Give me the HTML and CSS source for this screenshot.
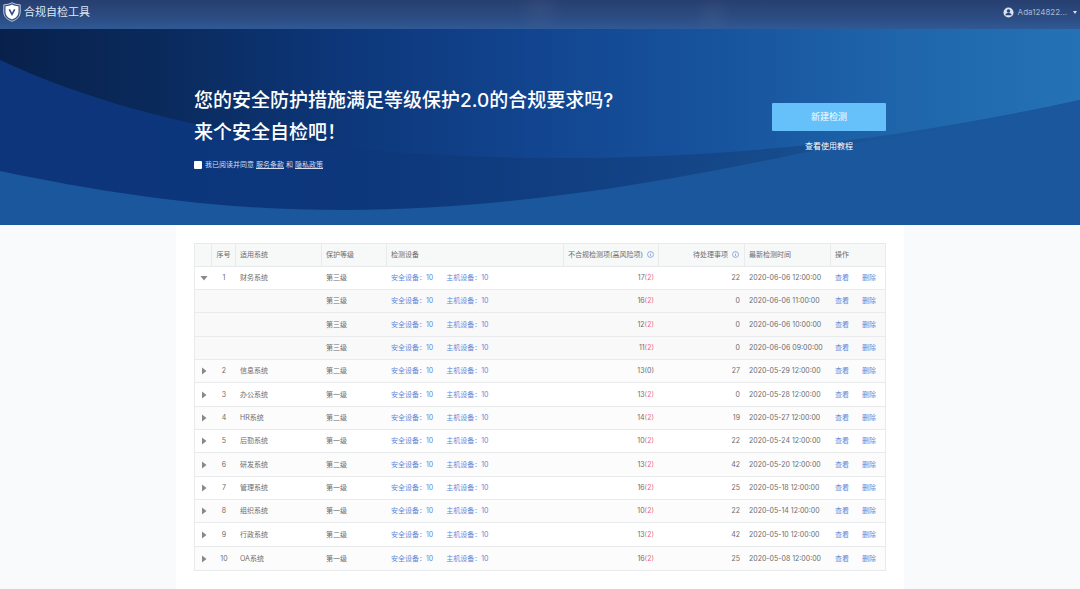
FILE: index.html
```html
<!DOCTYPE html>
<html lang="zh-CN">
<head>
<meta charset="utf-8">
<title>合规自检工具</title>
<meta name="viewport" content="width=device-width, initial-scale=1">
<link rel="stylesheet" href="styles.css">
</head>
<body>
<header class="topbar">
  <div class="brand">
    <svg class="brand-logo" viewBox="0 0 18 20" aria-hidden="true">
      <path d="M9 .7C6.5 2.2 3.700 2.700.8 2.800V10c0 4.700 3.300 7.500 8.200 9.300 4.900-1.800 8.200-4.600 8.200-9.300V2.800C14.300 2.700 11.500 2.200 9 .7z" fill="#2b4a80" stroke="#e9eff8" stroke-width=".8"/>
      <path d="M9 2.500C7 3.600 4.800 4.100 2.500 4.200V10c0 3.700 2.500 5.900 6.500 7.500 4-1.600 6.500-3.800 6.500-7.500V4.200C13.200 4.100 11 3.600 9 2.500z" fill="#fff"/>
      <path d="M6.300 7.400L9 12.300l2.700-4.900" fill="none" stroke="#2b4a80" stroke-width="1.600"/>
    </svg>
    <span class="brand-name">合规自检工具</span>
  </div>
  <button class="user" type="button">
    <svg class="user-icon" viewBox="0 0 12 12" aria-hidden="true">
      <circle cx="6" cy="6" r="5.500" fill="#d9e2f0"/>
      <circle cx="6" cy="4.300" r="1.900" fill="#2b4477"/>
      <path d="M2.700 8.900c0-1.700 1.500-2.300 3.300-2.300s3.300.6 3.300 2.300z" fill="#2b4477"/>
    </svg>
    <span>Ada124822...</span>
    <svg class="user-caret" viewBox="0 0 4 3" aria-hidden="true"><path d="M0 0h4L2 3z" fill="#d9e2f0"/></svg>
  </button>
</header>

<section class="hero">
  <svg class="hero-waves" viewBox="0 0 1080 196" preserveAspectRatio="none" aria-hidden="true">
    <defs>
      <linearGradient id="sky" x1="0" y1="0" x2="1" y2="0">
        <stop offset="0" stop-color="#08214c"/>
        <stop offset=".15" stop-color="#0a2a5c"/>
        <stop offset=".32" stop-color="#0d377a"/>
        <stop offset=".5" stop-color="#124590"/>
        <stop offset=".68" stop-color="#18559f"/>
        <stop offset=".84" stop-color="#1f66ab"/>
        <stop offset="1" stop-color="#2472b5"/>
      </linearGradient>
      <linearGradient id="mid" x1="0" y1="0" x2="1" y2="0">
        <stop offset="0" stop-color="#0c357b"/>
        <stop offset=".34" stop-color="#0d377b"/>
        <stop offset=".55" stop-color="#114083"/>
        <stop offset=".72" stop-color="#164b8b"/>
        <stop offset=".82" stop-color="#1a5699"/>
        <stop offset="1" stop-color="#1b579b"/>
      </linearGradient>
    </defs>
    <rect width="1080" height="196" fill="url(#sky)"/>
    <path d="M0 31C150 101 340 129 560 129C760 129 920 105 1080 71V196H0z" fill="url(#mid)"/>
    <path d="M0 142C130 169 230 181 345 181C520 181 690 148 830 118C920 104 1000 90 1080 71V196H0z" fill="#1b579c"/>
  </svg>
  <div class="hero-inner">
    <div class="hero-copy">
      <h1 class="hero-title">您的安全防护措施满足等级保护2.0的合规要求吗?<br>来个安全自检吧！</h1>
      <div class="agree">
        <input class="agree-box" type="checkbox" id="agree">
        <label for="agree">我已阅读并同意</label>
        <a href="#terms">服务条款</a>
        <span>和</span>
        <a href="#privacy">隐私政策</a>
      </div>
    </div>
    <div class="hero-actions">
      <button class="create" type="button">新建检测</button>
      <a class="tutorial" href="#tutorial">查看使用教程</a>
    </div>
  </div>
</section>

<main class="panel">
  <table class="checks">
    <colgroup><col class="c-toggle"><col class="c-no"><col class="c-system"><col class="c-level"><col class="c-device"><col class="c-issue"><col class="c-todo"><col class="c-time"><col class="c-action"></colgroup>
    <thead>
      <tr>
        <th></th><th class="center">序号</th><th>适用系统</th><th>保护等级</th><th>检测设备</th>
        <th class="num">不合规检测项(高风险项)<svg class="info" viewBox="0 0 8 8" aria-hidden="true"><circle cx="4" cy="4" r="3.400"/><path d="M4 3.500v2.400M4 2v.8"/></svg></th>
        <th class="num">待处理事项<svg class="info" viewBox="0 0 8 8" aria-hidden="true"><circle cx="4" cy="4" r="3.400"/><path d="M4 3.500v2.400M4 2v.8"/></svg></th>
        <th>最新检测时间</th><th>操作</th>
      </tr>
    </thead>
    <tbody id="rows"></tbody>
  </table>
</main>
<script src="app.js"></script>
</body>
</html>
```
FILE: styles.css
```css
* { box-sizing: border-box; }

body {
  margin: 0;
  min-height: 100vh;
  display: flex;
  flex-direction: column;
  background: #f9fafc;
  color: #6c6c6c;
  font: 7px/10px Inter, "Noto Sans CJK SC", sans-serif;
}

button {
  border: 0;
  font: inherit;
  cursor: pointer;
}

a { color: inherit; }

.topbar {
  display: flex;
  justify-content: space-between;
  align-items: flex-start;
  height: 29px;
  padding: 2px 3px;
  background:
    radial-gradient(circle at 50% 30%, rgba(255, 255, 255, .04), transparent 24px),
    radial-gradient(circle at 66% 50%, rgba(255, 255, 255, .04), transparent 20px),
    linear-gradient(#273f70, #2c4c82 60%, #305995);
}

.brand {
  display: flex;
  align-items: center;
  gap: 3px;
}

.brand-logo { width: 18px; height: 20px; }

.brand-name {
  color: #dfe8f5;
  font-size: 11px;
  line-height: 20px;
}

.user {
  display: flex;
  align-items: center;
  gap: 4px;
  height: 20px;
  padding: 0;
  background: none;
  color: #a9b8d2;
  font-size: 8px;
}

.user-icon { width: 11px; height: 11px; }
.user-caret { width: 4px; height: 3px; margin-left: 2px; }

.hero {
  position: relative;
  height: 196px;
  color: #fff;
}

.hero-waves {
  position: absolute;
  inset: 0;
  width: 100%;
  height: 100%;
}

.hero-inner {
  position: relative;
  display: flex;
  justify-content: space-between;
  max-width: 692px;
  margin: 0 auto;
  padding-top: 56px;
}

.hero-title {
  margin: 0;
  font-size: 19px;
  line-height: 32px;
  font-weight: 500;
}

.agree {
  display: flex;
  align-items: center;
  gap: 2px;
  margin-top: 11px;
  color: #d3def0;
}

.agree-box {
  appearance: none;
  width: 8px;
  height: 8px;
  margin: 0 1px 0 0;
  border-radius: 1px;
  background: #fff;
}

.agree-box:checked { background: #66c1fb; }

.hero-actions {
  display: flex;
  flex-direction: column;
  align-items: center;
  gap: 10px;
  padding-top: 18px;
}

.create {
  width: 114px;
  height: 28px;
  border-radius: 1px;
  background: #66c1fb;
  color: #fff;
  font-size: 9px;
}

.tutorial {
  font-size: 8px;
  text-decoration: none;
}

.panel {
  flex: 1;
  width: 100%;
  max-width: 728px;
  margin: 0 auto;
  padding: 18px;
  background: #fff;
}

.checks {
  width: 100%;
  table-layout: fixed;
  border-spacing: 0;
  border: 1px solid #e9eaec;
}

.c-toggle { width: 17px; }
.c-no { width: 24px; }
.c-system { width: 86px; }
.c-level { width: 65px; }
.c-device { width: 177px; }
.c-issue { width: 95px; }
.c-todo { width: 86px; }
.c-time { width: 86px; }

.checks th,
.checks td {
  height: 23px;
  padding: 0 5px 0 4px;
  border-bottom: 1px solid #e9eaec;
  text-align: left;
  font-weight: 400;
  white-space: nowrap;
}

.checks th {
  background: #f7f8f8;
  border-right: 1px solid #e9eaec;
}

.checks th:last-child { border-right: 0; }
.checks tbody tr:nth-child(3n) td { height: 24px; }
.checks tbody tr:last-child td { border-bottom: 0; }
.checks .striped { background: #fcfcfc; }
.checks .child { background: #f9f9fa; }
.checks .center { padding: 0; text-align: center; }
.checks .num { text-align: right; }

.checks a {
  margin-right: 13px;
  color: #6289da;
  text-decoration: none;
}

.checks a:last-child { margin-right: 0; }
.risk { color: #f0687d; }

.info {
  width: 7px;
  height: 7px;
  margin-left: 4px;
  vertical-align: -1px;
  fill: none;
  stroke: #6b8ee0;
  stroke-width: .8;
}

.toggle {
  display: block;
  width: 8px;
  height: 8px;
  margin: 0 auto;
  padding: 0;
  background: none;
}

.toggle svg {
  display: block;
  width: 8px;
  height: 8px;
  fill: #888;
}

.toggle[aria-expanded="true"] svg { transform: rotate(90deg); }
```
FILE: app.js
```js
const rows = [
  [1, '财务系统', '三', 17, 2, 22, '2020-06-06 12:00:00'],
  ['', '', '三', 16, 2, 0, '2020-06-06 11:00:00'],
  ['', '', '三', 12, 2, 0, '2020-06-06 10:00:00'],
  ['', '', '三', 11, 2, 0, '2020-06-06 09:00:00'],
  [2, '信息系统', '二', 13, 0, 27, '2020-05-29 12:00:00'],
  [3, '办公系统', '一', 13, 2, 0, '2020-05-28 12:00:00'],
  [4, 'HR系统', '二', 14, 2, 19, '2020-05-27 12:00:00'],
  [5, '后勤系统', '一', 10, 2, 22, '2020-05-24 12:00:00'],
  [6, '研发系统', '二', 13, 2, 42, '2020-05-20 12:00:00'],
  [7, '管理系统', '一', 16, 2, 25, '2020-05-18 12:00:00'],
  [8, '组织系统', '一', 10, 2, 22, '2020-05-14 12:00:00'],
  [9, '行政系统', '二', 13, 2, 42, '2020-05-10 12:00:00'],
  [10, 'OA系统', '一', 16, 2, 25, '2020-05-08 12:00:00']
];

document.getElementById('rows').innerHTML = rows.map(([no, system, level, issues, risk, todo, time]) => {
  const kind = no === '' ? 'child' : no % 2 === 0 ? 'striped' : '';
  const toggle = no === '' ? '' :
    `<button class="toggle" type="button" aria-label="展开" aria-expanded="${no === 1}"><svg viewBox="0 0 8 8"><path d="M2 .5L6.500 4 2 7.500z"/></svg></button>`;
  return `<tr class="${kind}">
    <td class="center">${toggle}</td><td class="center">${no}</td><td>${system}</td><td>第${level}级</td>
    <td><a href="#security">安全设备：10</a><a href="#host">主机设备：10</a></td>
    <td class="num">${issues}<span class="${risk ? 'risk' : ''}">(${risk})</span></td>
    <td class="num">${todo}</td><td>${time}</td>
    <td><a href="#view">查看</a><a href="#delete">删除</a></td>
  </tr>`;
}).join('');
```
